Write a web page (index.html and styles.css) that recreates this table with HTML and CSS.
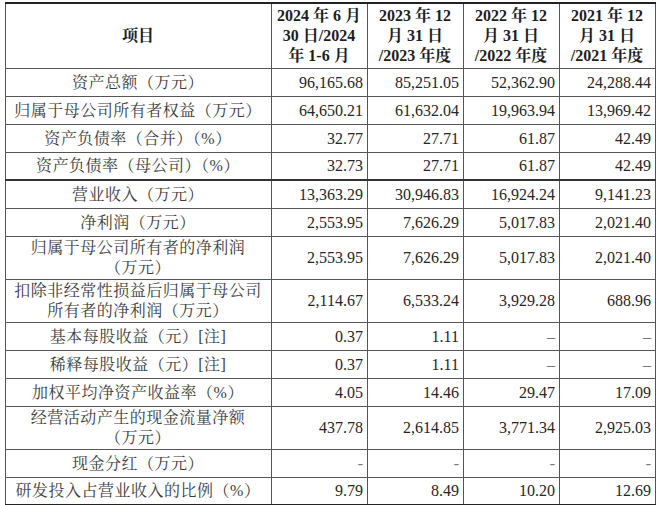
FILE: index.html
```html
<!DOCTYPE html>
<html lang="zh-CN">
<head>
<meta charset="utf-8">
<link rel="stylesheet" href="styles.css">
</head>
<body>
<table class="fin">
  <colgroup>
    <col class="c-item"><col class="c-num"><col class="c-num"><col class="c-num"><col class="c-num">
  </colgroup>
  <thead>
    <tr class="r-head">
      <th>项目</th>
      <th>2024 年 6 月<br>30 日/2024<br>年 1-6 月</th>
      <th>2023 年 12<br>月 31 日<br>/2023 年度</th>
      <th>2022 年 12<br>月 31 日<br>/2022 年度</th>
      <th>2021 年 12<br>月 31 日<br>/2021 年度</th>
    </tr>
  </thead>
  <tbody>
    <tr class="r1"><td>资产总额（万元）</td><td>96,165.68</td><td>85,251.05</td><td>52,362.90</td><td>24,288.44</td></tr>
    <tr class="r1"><td>归属于母公司所有者权益（万元）</td><td>64,650.21</td><td>61,632.04</td><td>19,963.94</td><td>13,969.42</td></tr>
    <tr class="r1"><td>资产负债率（合并）（%）</td><td>32.77</td><td>27.71</td><td>61.87</td><td>42.49</td></tr>
    <tr class="r1 sep"><td>资产负债率（母公司）（%）</td><td>32.73</td><td>27.71</td><td>61.87</td><td>42.49</td></tr>
    <tr class="r1"><td>营业收入（万元）</td><td>13,363.29</td><td>30,946.83</td><td>16,924.24</td><td>9,141.23</td></tr>
    <tr class="r1"><td>净利润（万元）</td><td>2,553.95</td><td>7,626.29</td><td>5,017.83</td><td>2,021.40</td></tr>
    <tr class="r2"><td>归属于母公司所有者的净利润<br>（万元）</td><td>2,553.95</td><td>7,626.29</td><td>5,017.83</td><td>2,021.40</td></tr>
    <tr class="r2"><td>扣除非经常性损益后归属于母公司<br>所有者的净利润（万元）</td><td>2,114.67</td><td>6,533.24</td><td>3,929.28</td><td>688.96</td></tr>
    <tr class="r1"><td>基本每股收益（元）[注]</td><td>0.37</td><td>1.11</td><td class="dash">–</td><td class="dash">–</td></tr>
    <tr class="r1"><td>稀释每股收益（元）[注]</td><td>0.37</td><td>1.11</td><td class="dash">–</td><td class="dash">–</td></tr>
    <tr class="r1"><td>加权平均净资产收益率（%）</td><td>4.05</td><td>14.46</td><td>29.47</td><td>17.09</td></tr>
    <tr class="r2"><td>经营活动产生的现金流量净额<br>（万元）</td><td>437.78</td><td>2,614.85</td><td>3,771.34</td><td>2,925.03</td></tr>
    <tr class="r1"><td>现金分红（万元）</td><td class="dash">-</td><td class="dash">-</td><td class="dash">-</td><td class="dash">-</td></tr>
    <tr class="r1 last"><td>研发投入占营业收入的比例（%）</td><td>9.79</td><td>8.49</td><td>10.20</td><td>12.69</td></tr>
  </tbody>
</table>
</body>
</html>
```
FILE: styles.css
```css
html, body {
  margin: 0;
  padding: 0;
  background: #ffffff;
}
body {
  padding: 2px 0 0 5px;
}
.fin {
  border-collapse: collapse;
  table-layout: fixed;
  width: 651px;
  font-family: "Liberation Serif", "Noto Serif CJK SC", "Noto Sans CJK SC", serif;
  font-size: 16px;
  color: #2e2e2e;
  border-top: 2px solid #222;
  border-bottom: 2px solid #222;
}
.c-item { width: 266px; }
.c-num { width: 96px; }
.fin th, .fin td {
  border: 1px solid #555;
  padding: 0 4px 0 3px;
  line-height: 21px;
}
.fin th {
  font-weight: bold;
  text-align: center;
  color: #1e1e1e;
  line-height: 20px;
  padding-top: 1px;
}
.fin tr.r-head th { border-top: 2px solid #222; }
.r-head { height: 65px; }
.fin td:first-child {
  text-align: center;
  color: #3c3c3c;
  letter-spacing: 0.5px;
}
.fin td {
  text-align: right;
  color: #262626;
}
.r1 { height: 28px; }
.r2 { height: 43px; }
.r2 td { line-height: 20px; }
.sep td { border-bottom: 2px solid #333; }
.last td { border-bottom: 2px solid #222; }
.dash { color: #777 !important; }
```
